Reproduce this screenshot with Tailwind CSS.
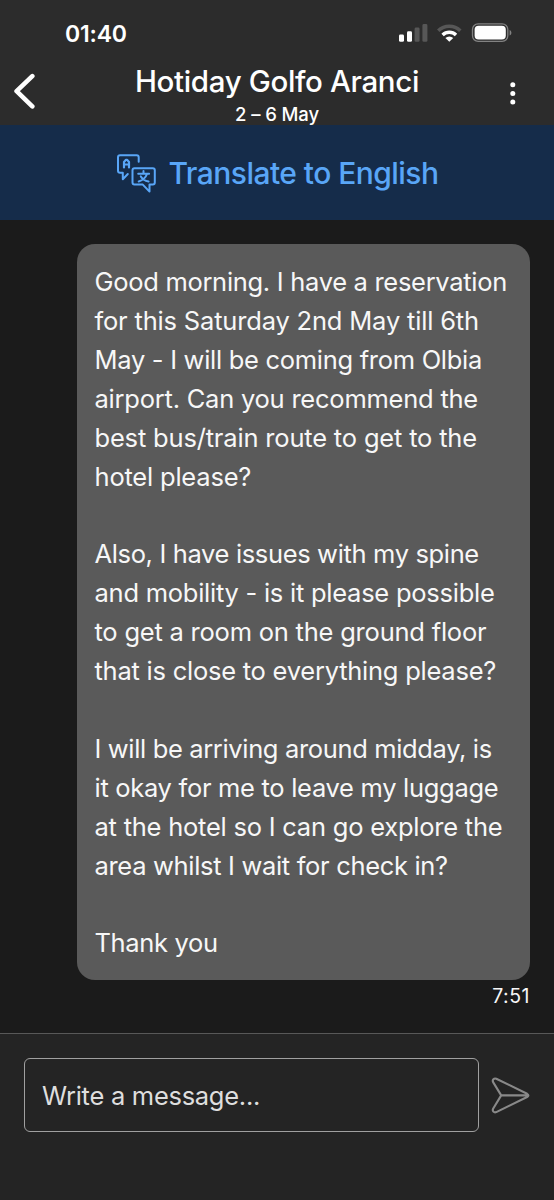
<!DOCTYPE html>
<html lang="en">
<head>
<meta charset="utf-8">
<meta name="viewport" content="width=device-width, initial-scale=1">
<title>Hotiday Golfo Aranci</title>
<script src="https://cdn.jsdelivr.net/npm/@tailwindcss/browser@4"></script>
</head>
<body class="bg-[#1b1b1b]">
<div class="flex h-[1200px] w-[554px] flex-col overflow-hidden bg-[#1b1b1b] font-['Inter','Liberation_Sans',sans-serif] whitespace-nowrap text-[#f7f7f7]">

  <header class="flex h-[125px] flex-col bg-[#2c2c2c] text-white">
    <!-- Status bar -->
    <div class="flex h-[63px] items-center justify-between pt-[3px] pr-[42px] pl-[65px]">
      <span class="pt-[2px] text-[23px] leading-none font-semibold tracking-[-0.2px]">01:40</span>
      <svg class="h-[20px] w-[114px]" viewBox="398 23 114 20" fill="none">
        <rect x="399" y="34.5" width="5" height="7.3" rx="1.4" fill="#fff"/>
        <rect x="407" y="31.2" width="5" height="10.6" rx="1.4" fill="#fff"/>
        <rect x="414.6" y="27.5" width="5" height="14.3" rx="1.4" fill="#575757"/>
        <rect x="422.4" y="24" width="5" height="17.8" rx="1.4" fill="#575757"/>
        <path d="M438.3 30.8a15.6 15.6 0 0 1 22 0" stroke="#575757" stroke-width="3.6"/>
        <path d="M442.6 35a9.6 9.6 0 0 1 13.4 0" stroke="#fff" stroke-width="3.4"/>
        <path d="M445.4 38a5.6 5.6 0 0 1 7.8 0l-3.9 3.7z" fill="#fff"/>
        <rect x="472.5" y="23.8" width="35.3" height="17.6" rx="5.6" stroke="#828282" stroke-width="1.3"/>
        <rect x="474.6" y="25.8" width="31.2" height="13.6" rx="3.9" fill="#fff"/>
        <path d="M509.6 29.9c2.4.9 2.4 4.6 0 5.5z" fill="#828282"/>
      </svg>
    </div>
    <!-- Title bar -->
    <div class="flex h-[62px] justify-between">
      <svg class="mt-[10px] ml-[12px] h-[36px] w-[26px]" viewBox="12 73 26 36" fill="none" stroke="#fff" stroke-width="4.6" stroke-linecap="round" stroke-linejoin="round"><path d="M32.3 76.2 16.6 91.2 32.3 106.4"/></svg>
      <div class="flex flex-col items-center pl-[8px]">
        <h1 class="text-[29.5px] leading-[36px] font-medium tracking-[-0.36px]">Hotiday Golfo Aranci</h1>
        <p class="mt-[3px] text-[18.5px] leading-[24px] font-medium tracking-[-0.1px]">2 – 6 May</p>
      </div>
      <svg class="mt-[18px] mr-[36px] h-[24px] w-[10px]" viewBox="508 81 10 24" fill="#fff"><circle cx="512.8" cy="84.7" r="2.5"/><circle cx="512.8" cy="93.4" r="2.5"/><circle cx="512.8" cy="102" r="2.5"/></svg>
    </div>
  </header>

  <div class="flex h-[95px] items-center justify-center bg-[#152c4a] text-[#59a6f7]">
    <svg class="h-[50px] w-[50px]" viewBox="0 1 50 50" fill="none" stroke="currentColor" stroke-width="2" stroke-linecap="round" stroke-linejoin="round">
      <path d="M26.7 14.8v-4.6q0-2-2-2H8q-2 0-2 2v13.6q0 2 2 2h2.8v6.4l5-5.2"/>
      <path d="M12 20.5v-5.5l2-2.2h1l2 2.2v5.5M12 17.5h5" stroke-width="2.2"/>
      <path d="M22.5 21.2h18.3q2 0 2 2v12.4q0 2-2 2h-3.3v7l-6.7-7h-8.3q-2 0-2-2V23.2q0-2 2-2z"/>
      <path d="M31.5 24v2.6M26.2 26.7h10.9M35 27c-1.4 3.9-4.4 6.3-8.3 7.5M28.8 29.4c1.6 2.7 4.2 4.3 7.8 5.1"/>
    </svg>
    <span class="pr-[3px] pl-[6px] text-[30px] leading-[40px] font-medium tracking-[-0.54px]">Translate to English</span>
  </div>

  <main class="flex h-[813px] flex-col items-end pt-[24px] pr-[24px]">
    <div class="h-[736px] w-[453px] rounded-[18px] bg-[#5a5a5a] pt-[19px] pl-[17.5px] text-[25.5px] leading-[38.9px]">
      <p class="mb-[38.9px]">
        <span class="block tracking-[-0.3px]">Good morning. I have a reservation</span>
        <span class="block tracking-[-0.18px]">for this Saturday 2nd May till 6th</span>
        <span class="block tracking-[-0.29px]">May - I will be coming from Olbia</span>
        <span class="block tracking-[-0.23px]">airport. Can you recommend the</span>
        <span class="block tracking-[-0.18px]">best bus/train route to get to the</span>
        <span class="block tracking-[-0.2px]">hotel please?</span>
      </p>
      <p class="mb-[38.9px]">
        <span class="block tracking-[-0.35px]">Also, I have issues with my spine</span>
        <span class="block tracking-[-0.25px]">and mobility - is it please possible</span>
        <span class="block tracking-[-0.22px]">to get a room on the ground floor</span>
        <span class="block tracking-[-0.24px]">that is close to everything please?</span>
      </p>
      <p class="mb-[38.9px]">
        <span class="block tracking-[-0.35px]">I will be arriving around midday, is</span>
        <span class="block tracking-[-0.3px]">it okay for me to leave my luggage</span>
        <span class="block tracking-[-0.23px]">at the hotel so I can go explore the</span>
        <span class="block tracking-[-0.32px]">area whilst I wait for check in?</span>
      </p>
      <p class="tracking-[-0.35px]">Thank you</p>
    </div>
    <time class="mt-[4px] text-[19.5px] leading-[24px] tracking-[0.5px]">7:51</time>
  </main>

  <footer class="flex flex-1 items-start border-t-[1.5px] border-[#585858] bg-[#242424] pt-[24px] pl-[24px]">
    <div class="flex h-[74px] w-[455px] items-center rounded-[6px] border border-[#a0a0a0] pt-[2px] pl-[17px] text-[25.5px] tracking-[-0.28px] text-[#dedede]">Write a message...</div>
    <svg class="mt-[12px] ml-[7px] h-[50px] w-[50px]" viewBox="0.5 -0.4 50 50" fill="none" stroke="#898989" stroke-width="2.1" stroke-linecap="round" stroke-linejoin="round">
      <path d="M10.8 8.3 41.6 23.4q2.6 1.6 0 3.2L10.8 41.7c-2.3.9-4.3-1-3.2-3.4L15.7 25 7.6 11.7c-1.1-2.4.9-4.3 3.2-3.4zM15.7 25h26.5"/>
    </svg>
  </footer>
</div>
</body>
</html>
